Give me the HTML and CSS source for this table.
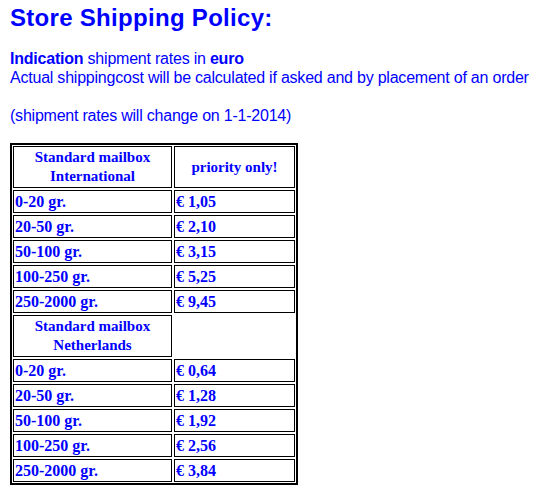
FILE: index.html
```html
<!DOCTYPE html>
<html>
<head>
<meta charset="utf-8">
<link rel="stylesheet" href="styles.css">
</head>
<body>
<h1 class="title">Store Shipping Policy:</h1>
<p class="intro"><b>Indication</b> shipment rates in <b>euro</b><br>Actual shippingcost will be calculated if asked and by placement of an order<br><br>(shipment rates will change on 1-1-2014)</p>
<div class="frame">
<table class="rates">
<tr><th class="c1">Standard mailbox<br>International</th><th class="c2">priority only!</th></tr>
<tr><td>0-20 gr.</td><td>€ 1,05</td></tr>
<tr><td>20-50 gr.</td><td>€ 2,10</td></tr>
<tr><td>50-100 gr.</td><td>€ 3,15</td></tr>
<tr><td>100-250 gr.</td><td>€ 5,25</td></tr>
<tr><td>250-2000 gr.</td><td>€ 9,45</td></tr>
<tr><th class="c1">Standard mailbox<br>Netherlands</th><th class="c2 blank"></th></tr>
<tr><td>0-20 gr.</td><td>€ 0,64</td></tr>
<tr><td>20-50 gr.</td><td>€ 1,28</td></tr>
<tr><td>50-100 gr.</td><td>€ 1,92</td></tr>
<tr><td>100-250 gr.</td><td>€ 2,56</td></tr>
<tr><td>250-2000 gr.</td><td>€ 3,84</td></tr>
</table>
</div>
</body>
</html>
```
FILE: styles.css
```css
html, body {
  margin: 0;
  background: #fff;
}
body {
  padding: 4px 10px 0 10px;
  color: #0000ff;
  font-family: "Liberation Sans", Arial, sans-serif;
}
.title {
  margin: 0;
  font-size: 24px;
  line-height: 28px;
  font-weight: bold;
  letter-spacing: 0.3px;
}
.intro {
  margin: 17px 0 18px 0;
  font-size: 16px;
  line-height: 19px;
  letter-spacing: -0.22px;
  white-space: nowrap;
}
.frame {
  display: inline-block;
  vertical-align: top;
  border: 2px solid #000;
}
.rates {
  margin: -1px;
  border-collapse: separate;
  border-spacing: 2px;
  font-family: "Liberation Serif", "Times New Roman", serif;
  font-size: 15px;
  font-weight: bold;
  line-height: 19px;
  color: #0000ff;
}
.rates th, .rates td {
  border: 1px solid #000;
  padding: 1px;
  vertical-align: middle;
}
.rates th {
  text-align: center;
  font-weight: bold;
}
.rates td {
  text-align: left;
  font-size: 16px;
}
.c1 {
  width: 155px;
}
.c2 {
  width: 117px;
}
.rates .blank {
  border: none;
}
```
